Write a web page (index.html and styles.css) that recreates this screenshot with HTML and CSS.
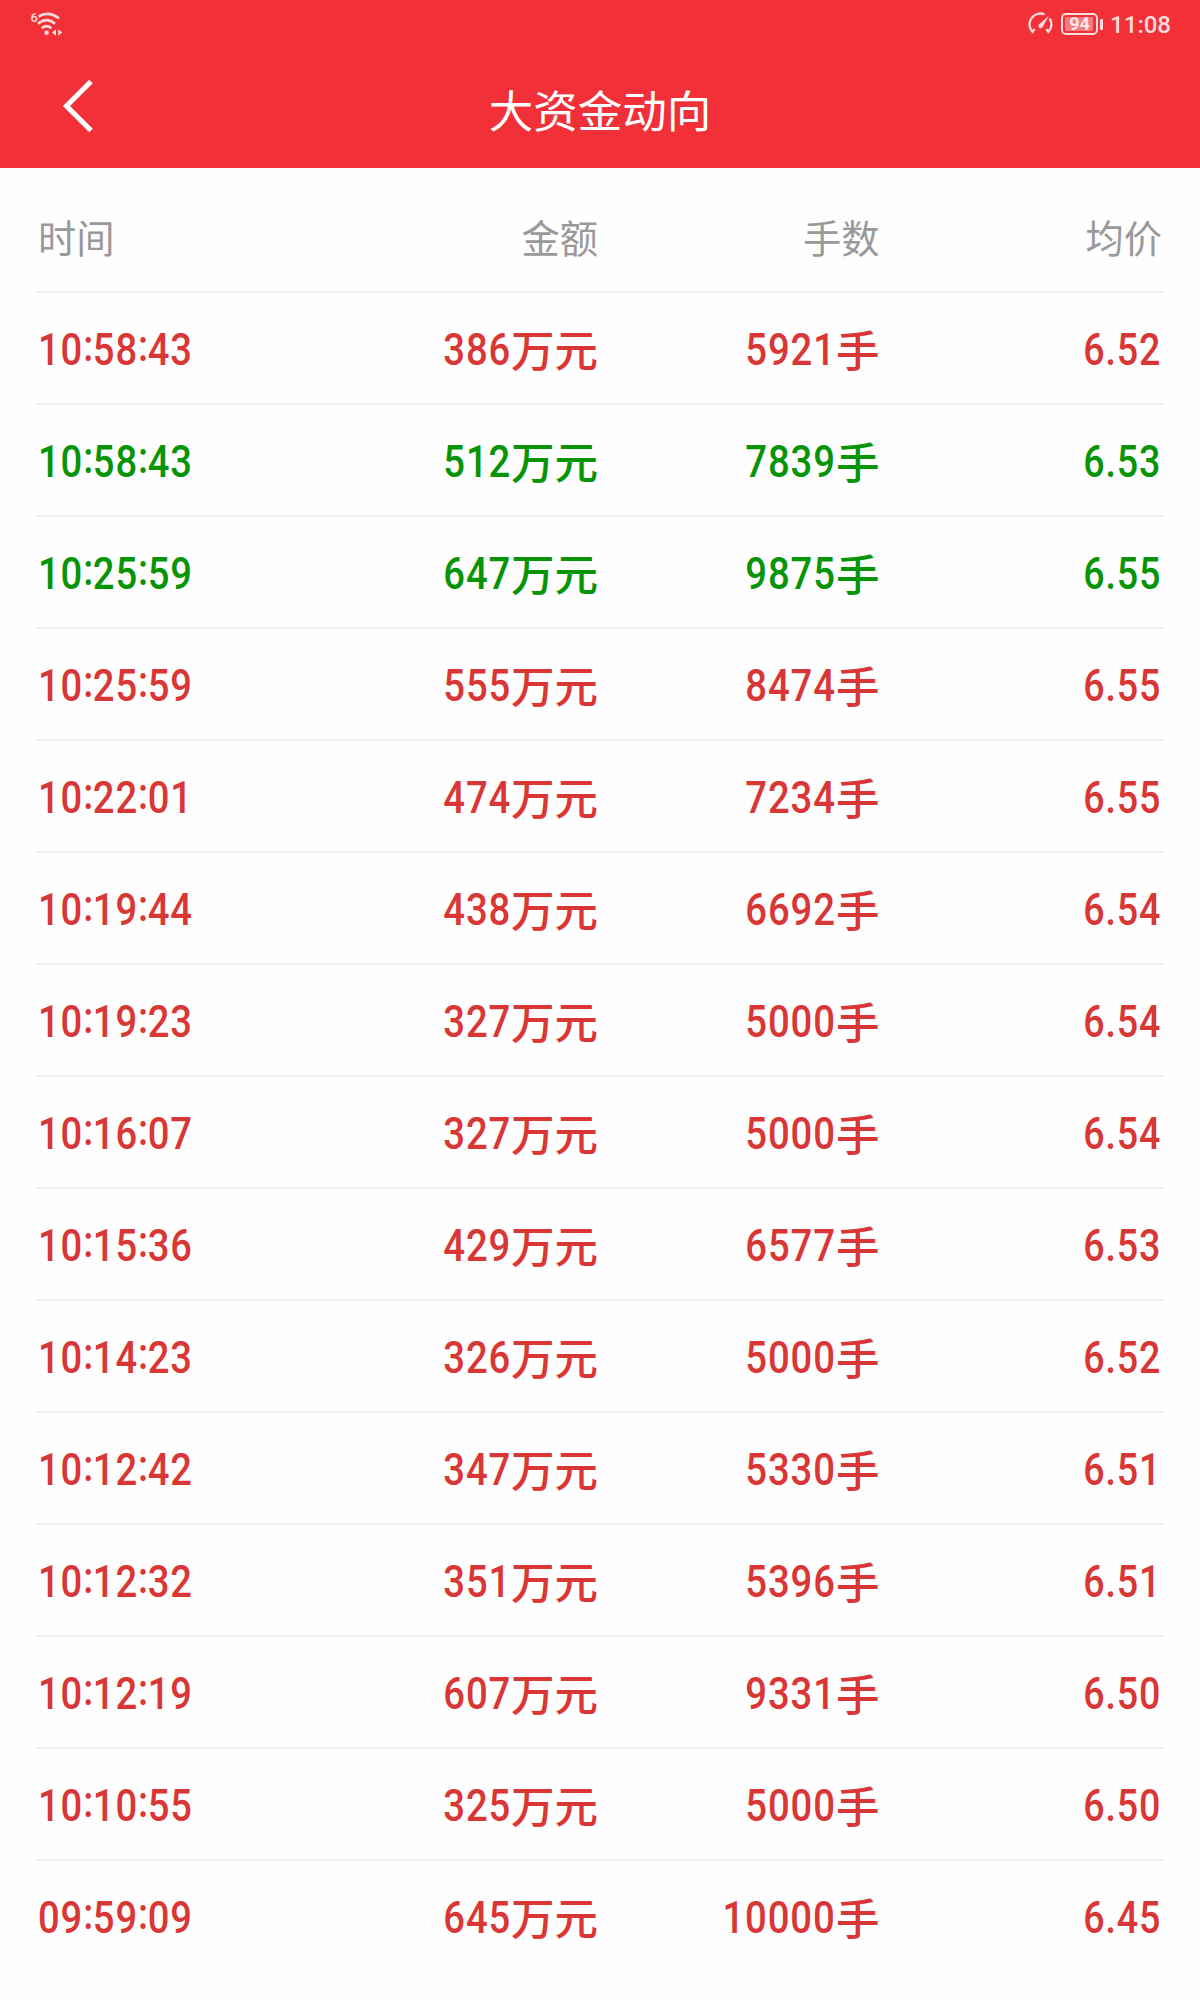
FILE: index.html
```html
<!DOCTYPE html>
<html lang="zh-CN">
<head>
<meta charset="utf-8">
<title>大资金动向</title>
<link rel="stylesheet" href="styles.css">
</head>
<body>
<header class="top">
  <div class="status">
    <svg class="wifi" width="34" height="26" viewBox="0 0 34 26" fill="none" stroke="currentColor" stroke-width="2.6">
      <path d="M8.500 5.500Q19 -.500 29 7.500M8 12.700Q16.500 5.500 25 12.700M11.700 17.200Q16.500 13.200 21.300 17.200"/>
      <circle cx="16.600" cy="21.700" r="2.200" fill="currentColor" stroke="none"/>
      <path d="M26 18.300v6.400l-4-3.200zM28.200 18.300v6.400l4-3.200z" fill="currentColor" stroke="none"/>
      <text class="wifi-gen" x="0.500" y="11">6</text>
    </svg>
    <div class="status-right">
      <svg class="gauge" width="26" height="24" viewBox="0 0 26 24" fill="none" stroke="currentColor" stroke-width="2.300">
        <path d="M16.500 2.300A10.900 10.900 0 0 0 4.600 20L6.500 17M21.600 6.500A10.900 10.900 0 0 1 20.400 20L18.500 17"/>
        <path d="M21 3.500L14.900 14.600A2.300 2.300 0 1 1 11.200 12.200z" fill="currentColor" stroke="none"/>
      </svg>
      <svg class="battery" width="43" height="24" viewBox="0 0 43 24">
        <rect x="1" y="2" width="35" height="20" rx="4" fill="none" stroke="currentColor" stroke-width="2"/>
        <rect x="4" y="5" width="28" height="14" rx="1" fill="#f77b80"/>
        <rect x="39" y="7" width="3" height="11" rx="1" fill="currentColor"/>
        <text class="level" x="18.500" y="18" text-anchor="middle">94</text>
      </svg>
      <span class="clock">11:08</span>
    </div>
  </div>
  <div class="navbar">
    <svg class="back" width="32" height="56" viewBox="0 0 32 56" fill="none" stroke="#fff" stroke-width="5"><path d="M29 3.500L4.500 28L29 52.500"/></svg>
    <h1 class="title">大资金动向</h1>
  </div>
</header>
<main class="list">
  <div class="row head"><span>时间</span><span>金额</span><span>手数</span><span>均价</span></div>
  <div class="row up"><span><em>10<i>:</i>58<i>:</i>43</em></span><span><em>386</em><b>万元</b></span><span><em>5921</em><b>手</b></span><span><em>6.52</em></span></div>
  <div class="row down"><span><em>10<i>:</i>58<i>:</i>43</em></span><span><em>512</em><b>万元</b></span><span><em>7839</em><b>手</b></span><span><em>6.53</em></span></div>
  <div class="row down"><span><em>10<i>:</i>25<i>:</i>59</em></span><span><em>647</em><b>万元</b></span><span><em>9875</em><b>手</b></span><span><em>6.55</em></span></div>
  <div class="row up"><span><em>10<i>:</i>25<i>:</i>59</em></span><span><em>555</em><b>万元</b></span><span><em>8474</em><b>手</b></span><span><em>6.55</em></span></div>
  <div class="row up"><span><em>10<i>:</i>22<i>:</i>01</em></span><span><em>474</em><b>万元</b></span><span><em>7234</em><b>手</b></span><span><em>6.55</em></span></div>
  <div class="row up"><span><em>10<i>:</i>19<i>:</i>44</em></span><span><em>438</em><b>万元</b></span><span><em>6692</em><b>手</b></span><span><em>6.54</em></span></div>
  <div class="row up"><span><em>10<i>:</i>19<i>:</i>23</em></span><span><em>327</em><b>万元</b></span><span><em>5000</em><b>手</b></span><span><em>6.54</em></span></div>
  <div class="row up"><span><em>10<i>:</i>16<i>:</i>07</em></span><span><em>327</em><b>万元</b></span><span><em>5000</em><b>手</b></span><span><em>6.54</em></span></div>
  <div class="row up"><span><em>10<i>:</i>15<i>:</i>36</em></span><span><em>429</em><b>万元</b></span><span><em>6577</em><b>手</b></span><span><em>6.53</em></span></div>
  <div class="row up"><span><em>10<i>:</i>14<i>:</i>23</em></span><span><em>326</em><b>万元</b></span><span><em>5000</em><b>手</b></span><span><em>6.52</em></span></div>
  <div class="row up"><span><em>10<i>:</i>12<i>:</i>42</em></span><span><em>347</em><b>万元</b></span><span><em>5330</em><b>手</b></span><span><em>6.51</em></span></div>
  <div class="row up"><span><em>10<i>:</i>12<i>:</i>32</em></span><span><em>351</em><b>万元</b></span><span><em>5396</em><b>手</b></span><span><em>6.51</em></span></div>
  <div class="row up"><span><em>10<i>:</i>12<i>:</i>19</em></span><span><em>607</em><b>万元</b></span><span><em>9331</em><b>手</b></span><span><em>6.50</em></span></div>
  <div class="row up"><span><em>10<i>:</i>10<i>:</i>55</em></span><span><em>325</em><b>万元</b></span><span><em>5000</em><b>手</b></span><span><em>6.50</em></span></div>
  <div class="row up"><span><em>09<i>:</i>59<i>:</i>09</em></span><span><em>645</em><b>万元</b></span><span><em>10000</em><b>手</b></span><span><em>6.45</em></span></div>
</main>
</body>
</html>
```
FILE: styles.css
```css
* { box-sizing: border-box; }
body {
  margin: 0;
  height: 2000px;
  overflow: hidden;
  background: #fefefe;
  font-family: Roboto, "Noto Sans CJK SC", sans-serif;
}
.top {
  height: 168px;
  background: #f23038;
  color: #fff;
}
.status {
  height: 48px;
  padding: 0 29px 0 30px;
  display: flex;
  align-items: center;
  justify-content: space-between;
  color: #ffdcdd;
}
.wifi-gen { font: 500 13px Roboto, sans-serif; fill: currentColor; stroke: none; }
.status-right { display: flex; align-items: center; }
.gauge { margin-right: 7px; }
.battery { margin-right: 6px; }
.level { font: 700 18px Roboto, sans-serif; fill: #ffe6e7; }
.clock { font-size: 24px; font-weight: 500; line-height: 48px; padding-top: 2px; }
.navbar {
  height: 120px;
  padding: 0 62px;
  display: grid;
  grid-template-columns: 32px 1fr 32px;
  align-items: center;
}
.back { margin-bottom: 4px; }
.title {
  margin: 0;
  padding-top: 2px;
  text-align: center;
  font: 400 44.500px/60px "Noto Sans CJK SC", sans-serif;
}
.list { padding: 0 37px; }
.row {
  height: 112px;
  padding-top: 24px;
  border-top: 2px solid #ededed;
  display: grid;
  grid-template-columns: repeat(4, 1fr);
  align-items: baseline;
  text-align: right;
  font-size: 43.500px;
  font-weight: 500;
  line-height: 64px;
  letter-spacing: 1px;
  white-space: nowrap;
}
.row span { padding-right: 2px; }
.row span:first-child { text-align: left; padding-left: 1px; }
.row.head {
  height: 123px;
  border-top: 0;
  padding-top: 37px;
  color: #999;
  font: 400 38.300px/64px "Noto Sans CJK SC", sans-serif;
  letter-spacing: 0;
}
.row.head span:last-child { padding-right: 1px; }
/* condensed numerals, anchored to the aligned edge of the cell */
.row em {
  display: inline-block;
  font-style: normal;
  transform: scaleX(.88);
  transform-origin: right;
}
.row span:first-child em { transform: scaleX(.878); transform-origin: left; }
.row span:last-child em { transform: scaleX(.865); }
.row i {
  font-style: normal;
  line-height: 0;
  vertical-align: 4px;
  margin-right: -1.500px;
}
.row b {
  font: 500 43.500px/64px "Noto Sans CJK SC", sans-serif;
  letter-spacing: 0;
  vertical-align: -2px;
}
.up { color: #d93636; }
.down { color: #079407; }
```
